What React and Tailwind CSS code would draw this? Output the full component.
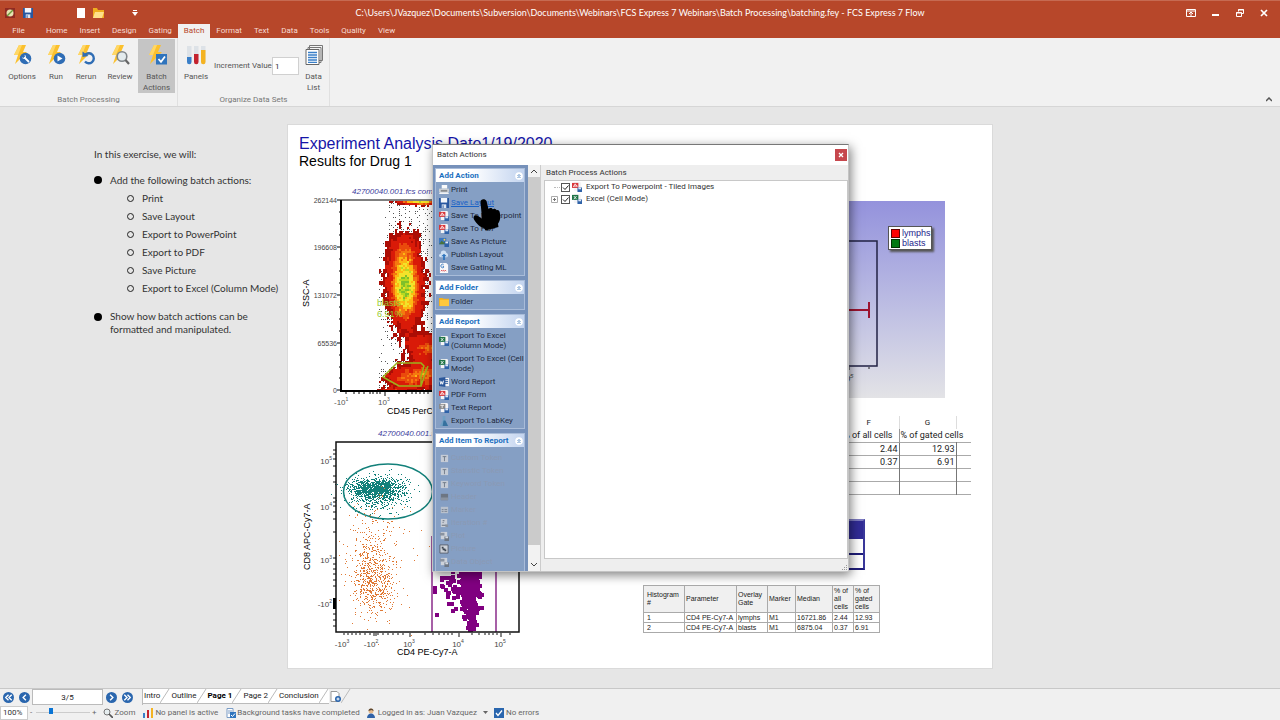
import { useState } from "react"
import clsx from "clsx"

// ---------- data ----------

const menuTabs = ["Home", "Insert", "Design", "Gating", "Batch", "Format", "Text", "Data", "Tools", "Quality", "View"]

const exercise = ["Print", "Save Layout", "Export to PowerPoint", "Export to PDF", "Save Picture", "Export to Excel (Column Mode)"]

const taskGroups = [
    {
        title: "Add Action",
        items: [
            { label: "Print", icon: "print" },
            { label: "Save Layout", icon: "save", active: true },
            { label: "Save To Powerpoint", icon: "pdf" },
            { label: "Save To PDF", icon: "pdf" },
            { label: "Save As Picture", icon: "picture" },
            { label: "Publish Layout", icon: "cloud" },
            { label: "Save Gating ML", icon: "xml" },
        ],
    },
    { title: "Add Folder", items: [{ label: "Folder", icon: "folder" }] },
    {
        title: "Add Report",
        items: [
            { label: "Export To Excel (Column Mode)", icon: "excel", tall: true },
            { label: "Export To Excel (Cell Mode)", icon: "excel", tall: true },
            { label: "Word Report", icon: "word" },
            { label: "PDF Form", icon: "pdf" },
            { label: "Text Report", icon: "text" },
            { label: "Export To LabKey", icon: "flask" },
        ],
    },
    {
        title: "Add Item To Report",
        disabled: true,
        items: [
            { label: "Custom Token", icon: "token" },
            { label: "Statistic Token", icon: "token" },
            { label: "Keyword Token", icon: "token" },
            { label: "Header", icon: "bar" },
            { label: "Marker", icon: "field" },
            { label: "Iteration #", icon: "xmlOff" },
            { label: "Plot", icon: "docOff" },
            { label: "Picture", icon: "frame" },
            { label: "Data Object", icon: "docOff" },
        ],
    },
]

const statRows = [
    ["1", "CD4 PE-Cy7-A", "lymphs", "M1", "16721.86", "2.44", "12.93"],
    ["2", "CD4 PE-Cy7-A", "blasts", "M1", "6875.04", "0.37", "6.91"],
]

// ---------- plot points ----------

function makeRandom(seed) {
    let s = seed
    return () => {
        s = (s * 1664525 + 1013904223) % 4294967296
        return s / 4294967296
    }
}

function cloud(seed, count, cx, cy, sx, sy, size, bottom = 999) {
    const rnd = makeRandom(seed)
    let d = ""
    for (let i = 0; i < count; i++) {
        const r = Math.sqrt(-2 * Math.log(rnd() + 0.0001))
        const a = rnd() * Math.PI * 2
        const x = Math.round(cx + r * Math.cos(a) * sx)
        const y = Math.round(cy + r * Math.sin(a) * sy)
        if (y + size <= bottom) d += `M${x} ${y}h${size}v${size}h-${size}z`
    }
    return d
}

const levels = [
    [0.97, "#7fc02a"],
    [0.86, "#b9d821"],
    [0.72, "#f2e32a"],
    [0.6, "#fdb813"],
    [0.5, "#f5780f"],
    [0.39, "#ea4a0c"],
    [0.2, "#d91a08"],
    [0.1, "#ab0d05"],
]

const blobs = [
    [63, 84, 10, 24, 0.98],
    [62, 44, 9, 10, 0.24],
    [84, 146, 12, 9, 0.46],
    [62, 176, 13, 8, 0.4],
    [86, 174, 14, 9, 0.42],
    [50, 189, 9, 2, 0.3],
    [66, 0, 9, 1, 0.25],
    [82, 0, 14, 2, 0.7],
]

function densityMap() {
    const rnd = makeRandom(77)
    const coarse = Array.from({ length: 26 * 49 }, () => rnd() - 0.5)
    const paths = levels.map(() => "")
    let dots = ""
    for (let y = 0; y < 190; y += 2) {
        for (let x = 0; x < 100; x += 2) {
            let v = 0
            for (const [bx, by, sx, sy, amp] of blobs) {
                v += amp * Math.exp(-((x - bx) ** 2) / (2 * sx * sx) - (y - by) ** 2 / (2 * sy * sy))
            }
            // clumps at the edge of a population are ragged, its core is smooth
            const clump = coarse[Math.floor(y / 4) * 26 + Math.floor(x / 4)]
            const noisy = v * (0.86 + rnd() * 0.28) + clump * (v > 0.02 ? 0.14 : 0.02)
            const i = levels.findIndex((l) => noisy > l[0])
            if (i >= 0) paths[i] += `M${x} ${y}h2v2h-2z`
            else if (x > 36 && rnd() < 0.05 + v * 4) dots += `M${x} ${y}h1v1h-1z`
            else if (x > 46 && y < 50 && rnd() < 0.14) dots += `M${x} ${y}h1v1h-1z`
        }
    }
    return { paths, dots }
}

const density = densityMap()
const tealCloud = cloud(5, 1000, 90, 46, 12, 5, 1) + cloud(9, 500, 92, 52, 16, 9, 1)
const orangeCloud = cloud(21, 620, 87, 139, 11, 17, 1) + cloud(31, 170, 85, 96, 13, 22, 1) + cloud(41, 25, 106, 105, 22, 32, 1)
const purpleCloud =
    cloud(61, 420, 183, 136, 5, 18, 4, 190) + cloud(65, 60, 183, 172, 3, 9, 4, 190) + cloud(71, 50, 168, 146, 10, 11, 4, 190)

// ---------- icons ----------

const Bolt = ({ children }) => (
    <svg viewBox="0 0 20 20" className="h-5 w-5">
        <path d="M7 0h7l-3 7h4L3 19l3-9H2z" fill="#fbc02d" />
        <path d="M7 0h3L6 10H2z" fill="#ffd766" />
        {children}
    </svg>
)

const ribbonIcons = {
    options: (
        <Bolt>
            <circle cx="13.5" cy="13.5" r="5.8" fill="#2f6db5" />
            <path d="M13 13l3.500 3.500" stroke="#fff" strokeWidth="1.800" strokeLinecap="round" />
            <path d="M12.500 9.800a2 2 0 1 1-2.500 2.500l1.500 .8 1.500-1.500z" fill="#fff" />
        </Bolt>
    ),
    run: (
        <Bolt>
            <circle cx="13.5" cy="13.5" r="5.8" fill="#2f6db5" />
            <path d="M11.500 10.500l5 3-5 3z" fill="#fff" />
        </Bolt>
    ),
    rerun: (
        <Bolt>
            <path d="M9.500 9.500A5 5 0 1 1 9 16.500" stroke="#2f6db5" strokeWidth="2.400" fill="none" />
            <path d="M6.500 12V6.500l6 4.500z" fill="#2f6db5" />
        </Bolt>
    ),
    review: (
        <Bolt>
            <circle cx="12" cy="11.500" r="4.800" fill="#e3ebee" stroke="#80868a" strokeWidth="1.600" />
            <path d="M15.500 15l3.500 4" stroke="#666" strokeWidth="2.200" />
        </Bolt>
    ),
    actions: (
        <Bolt>
            <rect x="9" y="9" width="11" height="10.500" fill="#2f74bd" />
            <path d="M11.500 14l2.500 2.800 4-5.300" stroke="#fff" strokeWidth="1.700" fill="none" />
        </Bolt>
    ),
    panels: (
        <svg viewBox="0 0 20 20" className="h-5 w-5">
            <path d="M1 1h4.500v16a2.200 2.200 0 0 1-4.500 0z" fill="#dde2e7" />
            <path d="M1 12h4.500v5a2.200 2.200 0 0 1-4.500 0z" fill="#3a7fc8" />
            <path d="M8 1h4.500v16a2.200 2.200 0 0 1-4.500 0z" fill="#dde2e7" />
            <path d="M8 9h4.500v8a2.200 2.200 0 0 1-4.500 0z" fill="#c4232e" />
            <path d="M15 1h4.500v16a2.200 2.200 0 0 1-4.500 0z" fill="#dde2e7" />
            <path d="M15 5h4.500v12a2.200 2.200 0 0 1-4.500 0z" fill="#f4b321" />
        </svg>
    ),
    list: (
        <svg viewBox="0 0 20 20" className="h-5 w-5">
            <path d="M5.500 .5h13v15h-13zM4 2.500h13v15H4z" fill="#f5f5f5" stroke="#777" />
            <path d="M2 4.500h13v15H2z" fill="#fff" stroke="#666" />
            <path d="M4 7.500h9M4 10h9M4 12.500h9M4 15h9M4 17.300h9" stroke="#3a7fc8" strokeWidth="1.300" />
        </svg>
    ),
}

const Doc = ({ color, letter }) => (
    <>
        <path d="M2 0h7l1 1v9H2z" fill="#f4f4f6" />
        <rect x="0" y="1" width="7" height="5.500" fill={color} />
        <path d={letter} fill="none" stroke="#fff" strokeWidth=".9" />
        <rect x="6" y="6" width="5" height="5" fill="#2f62a8" />
        <rect x="7" y="6" width="3" height="2" fill="#dfe8f5" />
    </>
)

const smallIcons = {
    print: (
        <>
            <path d="M3 0h6v4H3z" fill="#fafafa" />
            <path d="M0 4h11v4H0z" fill="#c9ccd0" />
            <path d="M2 6h7v1H2z" fill="#555" />
            <path d="M1 8h9l1 2H0z" fill="#f2f2f2" />
        </>
    ),
    save: (
        <>
            <path d="M0 0h11v11H0z" fill="#2757a0" />
            <path d="M2 0h7v5H2z" fill="#f3f6fb" />
            <path d="M3 7h5v4H3z" fill="#dde6f2" />
            <path d="M4 8h1v3H4z" fill="#2757a0" />
        </>
    ),
    pdf: <Doc color="#d8363a" letter="M1.500 5.500l2-3.500 2 3M2 4.500h4" />,
    text: <Doc color="#8b8b8b" letter="M1.500 2.500h4M3.500 2.500v3" />,
    excel: <Doc color="#1e7346" letter="M2 2.200l3 3.500M5 2.200L2 5.700" />,
    word: (
        <>
            <path d="M4 1h7v9H4z" fill="#f4f4f6" />
            <path d="M6 3h4M6 5h4M6 7h4" stroke="#2b579a" />
            <path d="M0 1l7-1v11l-7-1z" fill="#2b579a" />
            <path d="M1 4l1 4 1-3 1 3 1-4" stroke="#fff" fill="none" />
        </>
    ),
    picture: (
        <>
            <path d="M0 1h8v7H0z" fill="#3d77bd" />
            <path d="M0 8l3-4 2 2 1-1 2 3z" fill="#49733a" />
            <circle cx="6" cy="3" r="1" fill="#f7d154" />
            <path d="M6 5h5v6H6z" fill="#2f62a8" />
            <path d="M7 5h3v2H7z" fill="#dfe8f5" />
        </>
    ),
    cloud: (
        <>
            <path d="M2 8a2 2 0 0 1 0-4 3 3 0 0 1 6-1 3 3 0 0 1 1 5z" fill="#cfe0f3" />
            <path d="M5.500 4l3 3h-2v4h-2V7h-2z" fill="#2f74bd" />
        </>
    ),
    xml: (
        <>
            <path d="M1 0h7l2 2v9H1z" fill="#f8f8fa" />
            <path d="M5 1.500a2 2 0 1 0 0 3.500V3.500H4" stroke="#2f74bd" fill="none" />
            <path d="M2 9l1-1 1 1 1-1 1 1 1-1 1 1" stroke="#d8363a" fill="none" />
        </>
    ),
    folder: (
        <>
            <path d="M0 1h4l1 1h6v8H0z" fill="#f0ae1e" />
            <path d="M1 3h10v7H1z" fill="#ffc83d" />
        </>
    ),
    flask: (
        <>
            <path d="M4 0h3v5l3 6H1l3-6z" fill="#6f9fc4" />
            <path d="M5 5h2l3 6H4z" fill="#35719f" />
        </>
    ),
    token: (
        <>
            <path d="M2 2h8v8H2z" fill="#c6ccd6" />
            <path d="M4 4h4M6 4v5" stroke="#6e7887" />
        </>
    ),
    bar: (
        <>
            <path d="M2 2h8v7H2z" fill="#6d7683" />
            <path d="M2 6h8v3H2z" fill="#8a93a0" />
        </>
    ),
    field: (
        <>
            <path d="M2 2h8v7H2z" fill="#b9c1cd" />
            <path d="M3 5h2M6 5h3M3 7h2M6 7h3" stroke="#77818f" />
        </>
    ),
    xmlOff: (
        <>
            <path d="M2 1h7v9H2z" fill="#c9ced7" />
            <path d="M4 3h2M4 5h1M3 8h5" stroke="#5f6875" />
            <path d="M7 7h3v3H7z" fill="#8a93a0" />
        </>
    ),
    docOff: (
        <>
            <path d="M2 1h7v8H2z" fill="#cdd2da" />
            <path d="M1 2h5v3H1z" fill="#8a93a0" />
            <path d="M6 6h5v5H6z" fill="#6d7683" />
            <path d="M7 6h3v2H7z" fill="#d5dae1" />
        </>
    ),
    frame: (
        <>
            <path d="M1 1h9v9H1z" fill="#cdd2da" stroke="#555e6b" />
            <path d="M3 3h2v2H3zM6 6h2v2H6zM4 5h3v2H4z" fill="#3e4651" />
        </>
    ),
}

const SmallIcon = ({ name }) => (
    <svg viewBox="0 0 11 11" className="h-[10px] w-[10px] flex-none">{smallIcons[name]}</svg>
)

const Chevrons = () => (
    <svg viewBox="0 0 8 8" className="h-2 w-2">
        <circle cx="4" cy="4" r="3.800" fill="#fff" />
        <path d="M2.500 4L4 2.500 5.500 4M2.500 6L4 4.500 5.500 6" stroke="#3572b8" strokeWidth=".8" fill="none" />
    </svg>
)

// ---------- top ----------

const TitleBar = () => (
    <div className="flex h-[23px] items-center text-white">
        <div className="flex w-[160px] flex-none items-center pl-[5px]">
            <svg viewBox="0 0 10 10" className="h-[10px] w-[10px]">
                <path d="M0 0h10v10H0z" fill="#8f2a22" />
                <circle cx="5" cy="5" r="3.500" fill="#e7e2b2" />
                <path d="M2 8l6-6" stroke="#6e9b3c" strokeWidth="1.500" />
            </svg>
            <button aria-label="Save" className="ml-2">
                <svg viewBox="0 0 11 11" className="h-[10px] w-[10px]">{smallIcons.save}</svg>
            </button>
            <button aria-label="New" className="ml-11">
                <svg viewBox="0 0 8 10" className="h-[10px] w-2"><path d="M0 0h8v10H0z" fill="#fff" /></svg>
            </button>
            <button aria-label="Open" className="ml-2">
                <svg viewBox="0 0 11 10" className="h-[10px] w-[11px]">
                    <path d="M0 0h4l1 2h6v8H0z" fill="#f0ae1e" />
                    <path d="M2 4h9L9 10H0z" fill="#ffe08a" />
                </svg>
            </button>
            <button aria-label="Customize" className="ml-7">
                <svg viewBox="0 0 6 6" className="h-[6px] w-[6px]"><path d="M1 0h4v1H1zM0 2h6L3 6z" fill="#fff" /></svg>
            </button>
        </div>
        <p className="flex-1 text-center font-['Lato',sans-serif] text-[9px] whitespace-nowrap">C:\Users\JVazquez\Documents\Subversion\Documents\Webinars\FCS Express 7 Webinars\Batch Processing\batching.fey - FCS Express 7 Flow</p>
        <div className="flex w-[160px] flex-none items-center justify-end gap-4 pr-3">
            <button aria-label="Ribbon display">
                <svg viewBox="0 0 10 8" className="h-2 w-[10px]" fill="none" stroke="#fff"><path d="M.5 .5h9v7h-9zM1 2h8M5 7V4M3 5l2-2 2 2" /></svg>
            </button>
            <button aria-label="Minimize">
                <svg viewBox="0 0 8 8" className="h-2 w-2"><path d="M0 5h7v2H0z" fill="#fff" /></svg>
            </button>
            <button aria-label="Restore">
                <svg viewBox="0 0 8 8" className="h-2 w-2" fill="none" stroke="#fff"><path d="M2.500 2.500V.5h5v4h-2M2 1h6M.5 3.500h5v4h-5zM0 4h6" /></svg>
            </button>
            <button aria-label="Close">
                <svg viewBox="0 0 8 8" className="h-2 w-2" stroke="#fff" strokeWidth="1.700"><path d="M1 1l6 6M7 1L1 7" /></svg>
            </button>
        </div>
    </div>
)

const RibbonButton = ({ icon, label, active, className }) => (
    <button className={clsx("flex h-[54px] flex-none flex-col items-center pt-[6px]", active && "bg-[#c5c5c5]", className)}>
        {ribbonIcons[icon]}
        <span className="mt-[6px] text-center leading-[11px]">{label}</span>
    </button>
)

const Ribbon = () => (
    <div className="flex h-[69px] border-b border-[#d6d6d6] bg-[#f1f1f1] text-[8px] text-[#555]">
        <div className="flex w-[178px] flex-none flex-col border-r border-[#e0e0e0] pt-px">
            <div className="flex">
                <RibbonButton icon="options" label="Options" className="w-11" />
                <RibbonButton icon="run" label="Run" className="w-6" />
                <RibbonButton icon="rerun" label="Rerun" className="w-9" />
                <RibbonButton icon="review" label="Review" className="mr-[2px] w-8" />
                <RibbonButton icon="actions" label="Batch Actions" active className="w-[37px]" />
            </div>
            <p className="text-center leading-[14px] text-[#777]">Batch Processing</p>
        </div>
        <div className="flex w-[152px] flex-none flex-col border-r border-[#e0e0e0] pt-px">
            <div className="flex">
                <RibbonButton icon="panels" label="Panels" className="w-9" />
                <div className="flex h-[54px] flex-1 items-center justify-between">
                    <label htmlFor="increment" className="whitespace-nowrap">Increment Value</label>
                    <input id="increment" defaultValue="1" className="h-[18px] w-[27px] border border-[#d0d0d0] bg-white px-[2px] text-[#333]" />
                </div>
                <RibbonButton icon="list" label="Data List" className="mr-px w-[29px] px-1" />
            </div>
            <p className="text-center leading-[14px] text-[#777]">Organize Data Sets</p>
        </div>
        <div className="flex flex-1 items-end justify-end pr-2 pb-1">
            <button aria-label="Collapse ribbon">
                <svg viewBox="0 0 6 5" className="h-[5px] w-[6px]"><path d="M0 4l3-3 3 3" fill="none" stroke="#555" strokeWidth="1.500" /></svg>
            </button>
        </div>
    </div>
)

// ---------- page ----------

const Notes = () => (
    <aside className="w-[287px] flex-none pt-10 pl-[94px] font-['Lato',sans-serif] text-[10px] text-[#333]">
        <p className="leading-[14px]">In this exercise, we will:</p>
        <ul className="mt-3 w-[190px]">
            <li className="flex">
                <span className="mt-[3px] mr-2 h-2 w-2 rounded-full bg-black"></span>
                <div>
                    <p className="leading-[14px]">Add the following batch actions:</p>
                    <ul className="mt-[2px] pl-[17px]">
                        {exercise.map((e) => (
                            <li key={e} className="flex h-[18px] items-center whitespace-nowrap">
                                <span className="mr-2 h-[7px] w-[7px] rounded-full border border-[#222]"></span>
                                {e}
                            </li>
                        ))}
                    </ul>
                </div>
            </li>
            <li className="mt-[13px] flex">
                <span className="mt-[3px] mr-2 h-2 w-2 flex-none rounded-full bg-black"></span>
                <p className="w-[150px] leading-[13px]">Show how batch actions can be formatted and manipulated.</p>
            </li>
        </ul>
    </aside>
)

const sscTicks = [["262144", 12], ["196608", 59], ["131072", 107], ["65536", 155], ["0", 202]]

const DensityPlot = () => (
    <svg viewBox="0 0 160 240" className="absolute top-[63px] left-[10px] h-[240px] w-[160px] overflow-visible" fontFamily="Liberation Sans">
        <text x="54" y="6" fontSize="8" fontStyle="italic" fill="#3a3a9c">42700040.001.fcs compensated</text>
        <text transform="translate(11 119) rotate(-90)" fontSize="9" fill="#000">SSC-A</text>
        {sscTicks.map(([t, y]) => (
            <g key={t}>
                <text x="39" y={y + 3} fontSize="7" textAnchor="end" fill="#444">{t}</text>
                <path d={`M39 ${y}h4`} stroke="#000" />
            </g>
        ))}
        <path d="M41 24h2M41 36h2M41 47h2M41 71h2M41 83h2M41 95h2M41 119h2M41 131h2M41 143h2M41 167h2M41 179h2M41 190h2" stroke="#000" />
        <g transform="translate(43 13)" shapeRendering="crispEdges">
            <path d={density.dots} fill="#555" />
            {density.paths.map((d, i) => <path key={i} d={d} fill={levels[i][1]} />)}
        </g>
        <path d="M43 12v191h117" fill="none" stroke="#000" strokeWidth="2" />
        <path d="M43 12h117" stroke="#000" />
        <path d="M48 204v2M56 204v2M61 204v2M66 204v2M72 204v2M75 204v2M79 204v2M82 204v2M87 204v4M101 204v2M108 204v2M114 204v2M118 204v2M122 204v2M126 204v2M130 204v2" stroke="#000" />
        <path d="M85 189l14-14h24l3 3-3 10v10h-22zM123 198l4-12 3-8" fill="none" stroke="#9bb31c" strokeWidth="1.500" />
        <text x="79" y="118" fontSize="9" fill="#9acd32">blasts</text>
        <text x="79" y="129" fontSize="9" fill="#9acd32">6.91%</text>
        <text x="36" y="217" fontSize="8" fill="#555">-10<tspan dy="-4" fontSize="5">1</tspan></text>
        <text x="80" y="217" fontSize="8" fill="#555">10<tspan dy="-4" fontSize="5">3</tspan></text>
        <text x="89" y="226" fontSize="9" fill="#000">CD45 PerCP-A</text>
    </svg>
)

const cd8Ticks = [["10", "5", 19], ["10", "4", 65], ["10", "3", 118], ["-10", "2", 162]]
const cd4Ticks = [["-10", "3", 7], ["-10", "2", 36], ["10", "3", 74], ["10", "4", 123], ["10", "5", 165]]

const ScatterPlot = () => (
    <svg viewBox="0 0 240 240" className="absolute top-[303px] left-[10px] h-[240px] w-[240px] overflow-visible" fontFamily="Liberation Sans">
        <text x="80" y="8" fontSize="8" fontStyle="italic" fill="#3a3a9c">42700040.001.fcs compensated</text>
        <text transform="translate(12 142) rotate(-90)" fontSize="9" fill="#000">CD8 APC-Cy7-A</text>
        <g shapeRendering="crispEdges" transform="translate(-12 14)">
            <path d={tealCloud} fill="#12807a" />
            <path d={orangeCloud} fill="#e07a35" />
            <path d={purpleCloud} fill="#800080" />
        </g>
        <ellipse cx="90" cy="63.500" rx="44.500" ry="27.500" fill="none" stroke="#12807a" strokeWidth="1.500" />
        <path d="M134 108v96M198 108v96M134 108h64" fill="none" stroke="#8a2c8a" strokeWidth="1.500" />
        <path d="M38 14h183v190H38z" fill="none" stroke="#111" strokeWidth="1.500" />
        <path d="M35 20h3M35 24h3M35 29h3M35 36h3M35 46h3M35 52h3M35 68h3M35 72h3M35 76h3M35 82h3M35 89h3M35 102h3M35 128h3M35 134h3M35 139h3M35 144h3M35 150h3M35 156h3M35 184h3M35 190h3M35 196h3" transform="translate(0 2)" stroke="#111" />
        <path d="M35 170h3v11h-3z" fill="#000" />
        <path d="M46 205v2M50 205v2M54 205v2M58 205v2M62 205v2M67 205v2M72 205v2M76 205v3M78 205v3M80 205v2M85 205v2M90 205v2M95 205v2M100 205v2M105 205v2M112 205v4M127 205v2M135 205v2M141 205v2M146 205v2M150 205v2M154 205v2M161 205v4M174 205v2M181 205v2M187 205v2M191 205v2M195 205v2M199 205v2M203 205v4M212 205v2" stroke="#111" />
        {cd8Ticks.map(([b, e, y]) => (
            <text key={b + e} x="34" y={y + 17} fontSize="8" textAnchor="end" fill="#444">{b}<tspan dy="-4" fontSize="5">{e}</tspan></text>
        ))}
        {cd4Ticks.map(([b, e, x]) => (
            <text key={b + e} x={x + 37} y="219" fontSize="8" textAnchor="middle" fill="#444">{b}<tspan dy="-4" fontSize="5">{e}</tspan></text>
        ))}
        <text x="99" y="227" fontSize="9" fill="#000">CD4 PE-Cy7-A</text>
    </svg>
)

const OverlayPlot = () => (
    <div className="absolute top-[76px] left-[357px] h-[197px] w-[300px] bg-linear-to-b from-[#9492dc] to-[#e3e3e6]">
        <svg viewBox="0 0 300 197" className="h-full w-full" fontFamily="Liberation Sans">
            <path d="M30 40h202v125H30z" fill="none" stroke="#222244" strokeWidth="1.500" />
            <path d="M100 109h124" stroke="#9c1430" strokeWidth="2" />
            <path d="M224 101v16" stroke="#9c1430" strokeWidth="2" />
            <path d="M204 166v3M224 166v2" stroke="#222" />
            <text x="195" y="181" fontSize="9" fontStyle="italic" fill="#444">10<tspan dy="-4" fontSize="6">5</tspan></text>
        </svg>
        <div className="absolute top-[25px] right-[13px] w-[44px] border border-[#555] bg-white py-px pl-[2px] font-['Liberation_Sans',sans-serif] text-[9px] leading-[10px] text-[#1d1d8c] shadow-[2px_2px_2px_#555]">
            <p className="flex items-center gap-[2px]"><span className="h-[9px] w-[9px] border border-[#600] bg-[#f00]"></span>lymphs</p>
            <p className="flex items-center gap-[2px]"><span className="h-[9px] w-[9px] border border-[#030] bg-[#007a10]"></span>blasts</p>
        </div>
    </div>
)

const SheetTable = () => (
    <table className="absolute top-[291px] left-[551px] w-[132px] table-fixed border-collapse text-[9px] leading-[12px] whitespace-nowrap text-[#222]">
        <colgroup>
            <col className="w-[60px]" />
            <col className="w-[57px]" />
            <col />
        </colgroup>
        <thead>
            <tr className="h-[13px] text-[8px]">
                <th className="border-r border-[#ddd] font-normal">F</th>
                <th className="border-r border-[#ddd] font-normal">G</th>
                <th></th>
            </tr>
        </thead>
        <tbody className="text-right">
            <tr className="h-[13px] border-b border-[#aaa]">
                <td className="border-r border-[#999] pr-[6px]">% of all cells</td>
                <td className="pl-px text-left">% of gated cells</td>
                <td></td>
            </tr>
            {[["2.44", "12.93"], ["0.37", "6.91"], ["", ""], ["", ""]].map(([f, g], i) => (
                <tr key={i} className="h-[13px] border-b border-[#aaa]">
                    <td className="border-r border-[#777] pr-px">{f}</td>
                    <td className="border-r border-[#777] pr-px">{g}</td>
                    <td></td>
                </tr>
            ))}
        </tbody>
    </table>
)

const StatsTable = () => (
    <table className="absolute top-[460px] left-[355px] w-[237px] table-fixed border border-[#888] font-['Liberation_Sans',sans-serif] text-[7px] leading-[8px] text-[#222]">
        <colgroup>
            <col className="w-[41px]" />
            <col className="w-[52px]" />
            <col className="w-[31px]" />
            <col className="w-[28px]" />
            <col className="w-[37px]" />
            <col className="w-[21px]" />
            <col />
        </colgroup>
        <thead>
            <tr className="h-[27px] bg-[#f0f0f0] text-left">
                {["Histogram #", "Parameter", "Overlay Gate", "Marker", "Median", "% of all cells", "% of gated cells"].map((h) => (
                    <th key={h} className="border border-[#aaa] px-px font-normal first:pl-[3px]">{h}</th>
                ))}
            </tr>
        </thead>
        <tbody>
            {statRows.map((r) => (
                <tr key={r[0]} className="h-[10px] whitespace-nowrap">
                    {r.map((c, i) => <td key={i} className="border border-[#aaa] px-px first:pl-[3px]">{c}</td>)}
                </tr>
            ))}
        </tbody>
    </table>
)

const LayoutPage = () => (
    <section className="relative mt-[17px] h-[545px] w-[706px] flex-none overflow-hidden border border-[#dadada] bg-white">
        <h1 className="pt-[10px] pl-[11px] font-['Liberation_Sans',sans-serif] text-[16px] leading-[18px] text-[#1515a8]">Experiment Analysis Date1/19/2020</h1>
        <h2 className="pl-[11px] font-['Liberation_Sans',sans-serif] text-[14px] leading-[16px] text-black">Results for Drug 1</h2>
        <DensityPlot />
        <ScatterPlot />
        <OverlayPlot />
        <SheetTable />
        <div className="absolute top-[394px] left-[452px] w-[125px] border-t-2 border-r-2 border-b-2 border-t-[#7d7bc0] border-r-[#3a389a] border-b-[#1f1d7a]">
            <div className="h-[18px] bg-[#312c96]"></div>
            <div className="h-[16px] border-b-2 border-[#1f1d7a]"></div>
            <div className="h-[13px]"></div>
        </div>
        <StatsTable />
    </section>
)

// ---------- dialog ----------

const TaskGroup = ({ group }) => {
    const [open, setOpen] = useState(true)
    return (
        <div className={clsx("border border-[#a9bcd9]", group.disabled && "flex-1")}>
            <button
                className="flex h-[13px] w-full items-center justify-between bg-linear-to-r from-white from-40% to-[#c3d4ef] pr-px pl-[3px] text-[8px] font-bold whitespace-nowrap text-[#1b6fc0]"
                onClick={() => setOpen((prev) => !prev)}
            >
                {group.title}
                <Chevrons />
            </button>
            {open && (
                <ul className={clsx("bg-[#859fc4]", group.disabled ? "py-1" : "py-px")}>
                    {group.items.map((item) => (
                        <li key={item.label}>
                            <button
                                disabled={group.disabled}
                                className={clsx(
                                    "flex w-full items-center gap-[2px] pl-[3px] text-left text-[8px] leading-[10px]",
                                    item.tall ? "h-[23px]" : "h-[13px] whitespace-nowrap",
                                    group.disabled && "text-[#8b9ab4]",
                                    !group.disabled && (item.active ? "text-[#1a62c6] underline" : "text-[#1f2a3c]")
                                )}
                            >
                                <SmallIcon name={item.icon} />
                                {item.label}
                            </button>
                        </li>
                    ))}
                </ul>
            )}
        </div>
    )
}

const TreeItem = ({ id, icon, label, expandable }) => {
    const [checked, setChecked] = useState(true)
    return (
        <li className="flex h-3 items-center">
            <span className="flex w-4 items-center pl-[6px]">
                {expandable ? (
                    <button aria-label="Expand">
                        <svg viewBox="0 0 7 7" className="h-[7px] w-[7px]" fill="none"><path d="M.5 .5h6v6h-6z" stroke="#aaa" /><path d="M2 3.500h3M3.500 2v3" stroke="#777" /></svg>
                    </button>
                ) : (
                    <span className="ml-[3px] w-[6px] border-t border-dotted border-[#bbb]"></span>
                )}
            </span>
            <span className="relative flex h-[9px] w-[9px]">
                <input
                    id={id}
                    type="checkbox"
                    checked={checked}
                    onChange={() => setChecked((prev) => !prev)}
                    className="peer h-[9px] w-[9px] appearance-none border border-[#555] bg-white"
                />
                <svg viewBox="0 0 9 9" className="pointer-events-none absolute inset-0 hidden h-[9px] w-[9px] peer-checked:block"><path d="M2 4.500l2 2L7.500 2.500" fill="none" stroke="#222" /></svg>
            </span>
            <label htmlFor={id} className="flex items-center gap-1 pl-[2px]">
                <SmallIcon name={icon} />
                {label}
            </label>
        </li>
    )
}

const BatchDialog = () => (
    <div role="dialog" aria-label="Batch Actions" className="absolute top-[37px] left-[432px] flex h-[428px] w-[417px] flex-col border border-t-[#777] border-[#c4c4c4] bg-[#eee] text-[8px] text-[#333] shadow-[2px_3px_10px_rgba(0,0,0,0.5)]">
        <header className="flex h-5 flex-none items-center justify-between bg-white pr-px pl-1">
            <h3>Batch Actions</h3>
            <button aria-label="Close" className="flex h-3 w-3 items-center justify-center bg-[#c6474d]">
                <svg viewBox="0 0 6 6" className="h-[6px] w-[6px]" stroke="#fff" strokeWidth="1.300"><path d="M1 1l4 4M5 1L1 5" /></svg>
            </button>
        </header>
        <div className="flex min-h-0 flex-1">
            <nav className="flex w-[95px] flex-none flex-col gap-1 overflow-hidden bg-[#7691ba] pt-[3px] pr-[3px] pl-[2px]">
                {taskGroups.map((g) => <TaskGroup key={g.title} group={g} />)}
            </nav>
            <div className="flex w-3 flex-none flex-col bg-[#f2f2f2]">
                <button aria-label="Scroll up" className="flex h-3 items-center justify-center">
                    <svg viewBox="0 0 6 4" className="h-1 w-[6px]"><path d="M0 4l3-3 3 3" fill="none" stroke="#444" /></svg>
                </button>
                <div className="flex-1 bg-[#cbcbcb]"></div>
                <button aria-label="Scroll down" className="flex h-[26px] items-end justify-center pb-1">
                    <svg viewBox="0 0 6 4" className="h-1 w-[6px]"><path d="M0 0l3 3 3-3" fill="none" stroke="#444" /></svg>
                </button>
            </div>
            <div className="flex flex-1 flex-col border-l border-[#ccc] pl-[3px]">
                <p className="pl-[2px] leading-[15px]">Batch Process Actions</p>
                <ul className="flex-1 border border-[#c8c8c8] bg-white">
                    <TreeItem id="tiled" icon="pdf" label="Export To Powerpoint - Tiled Images" />
                    <TreeItem id="cell" icon="excel" label="Excel (Cell Mode)" expandable />
                </ul>
                <div className="flex h-3 items-end justify-end">
                    <svg viewBox="0 0 6 6" className="h-[6px] w-[6px]"><path d="M4 0h1v1H4zM2 2h1v1H2zM4 2h1v1H4zM0 4h1v1H0zM2 4h1v1H2zM4 4h1v1H4z" fill="#999" /></svg>
                </div>
            </div>
        </div>
    </div>
)

const HandPointer = () => (
    <svg viewBox="0 0 28 35" className="pointer-events-none absolute top-[91px] left-[473px] h-[35px] w-7">
        <path d="M7.500 4C7 1 12 0 13.500 3l2 8c1-1.500 3.500-1.500 4.300.300 1.200-1 3.200-.5 3.700 1 1.500-.6 2.800.3 3.200 2 1 4 .8 8-1.700 11.500l.5 3.200-13 3.500-1.500-2.500C7 29.500 4 26 1 21.500c-1.700-3 1.500-5.500 4-3.500l4 2.500z" fill="#000" />
    </svg>
)

// ---------- bottom ----------

const NavButton = ({ label, d }) => (
    <button aria-label={label} className="flex w-4 justify-center">
        <svg viewBox="0 0 12 12" className="h-[11px] w-[11px]">
            <circle cx="6" cy="6" r="6" fill="#2a66ae" />
            <path d={d} fill="none" stroke="#fff" strokeWidth="1.500" />
        </svg>
    </button>
)

const Slant = () => (
    <svg viewBox="0 0 10 14" className="h-[14px] w-[10px] flex-none"><path d="M0 14L9 0" stroke="#bbb" /></svg>
)

const PageTabs = () => {
    const [page, setPage] = useState("Page 1")
    return (
        <div className="flex h-[17px] items-center border-t border-[#c8c8c8] bg-[#f0f0f0] text-[8px] text-[#222]">
            <NavButton label="First page" d="M6 3L3 6l3 3M9.500 3l-3 3 3 3" />
            <NavButton label="Previous page" d="M7.500 3l-3 3 3 3" />
            <input aria-label="Page" defaultValue="3/5" className="h-4 w-[71px] border border-[#bbb] bg-white text-center" />
            <NavButton label="Next page" d="M4.500 3l3 3-3 3" />
            <NavButton label="Last page" d="M2.500 3l3 3-3 3M6 3l3 3-3 3" />
            <div className="ml-[7px] flex h-full items-start border-l border-[#bbb]">
                {["Intro", "Outline", "Page 1", "Page 2", "Conclusion"].map((p) => (
                    <div key={p} className="flex border-b border-[#bbb] bg-white">
                        <button className={clsx("pl-px leading-[14px] whitespace-nowrap", p === page && "font-bold text-black")} onClick={() => setPage(p)}>{p}</button>
                        <Slant />
                    </div>
                ))}
                <button aria-label="Add page" className="ml-px pt-[2px]">
                    <svg viewBox="0 0 11 11" className="h-[11px] w-[11px]">
                        <path d="M1 .5h6l2 2v8H1z" fill="#fff" stroke="#999" />
                        <circle cx="8" cy="8" r="3" fill="#2a66ae" />
                        <path d="M6.500 8h3M8 6.500v3" stroke="#fff" />
                    </svg>
                </button>
                <Slant />
            </div>
        </div>
    )
}

const StatusBar = () => (
    <footer className="flex h-[15px] items-center bg-[#f0f0f0] text-[8px] whitespace-nowrap text-[#666]">
        <input aria-label="Zoom level" defaultValue="100%" className="h-[14px] w-7 border border-[#ccc] bg-white px-[2px] text-[#333]" />
        <span className="ml-[2px] w-[4px]">-</span>
        <input
            aria-label="Zoom"
            type="range"
            min="0"
            max="100"
            defaultValue="26"
            className="mx-[2px] h-2 w-[54px] appearance-none bg-transparent [&::-webkit-slider-runnable-track]:h-px [&::-webkit-slider-runnable-track]:bg-[#ccc] [&::-webkit-slider-thumb]:-mt-1 [&::-webkit-slider-thumb]:h-[6px] [&::-webkit-slider-thumb]:w-1 [&::-webkit-slider-thumb]:appearance-none [&::-webkit-slider-thumb]:bg-[#0a74d4]"
        />
        <span>+</span>
        <button className="ml-[6px] flex items-center gap-[2px]">
            <svg viewBox="0 0 10 10" className="h-[10px] w-[10px]"><circle cx="4" cy="4" r="3" fill="#e6eef0" stroke="#777" /><path d="M6 6l4 4" stroke="#555" strokeWidth="1.700" /></svg>
            Zoom
        </button>
        <p className="ml-2 flex items-center gap-[2px]">
            <svg viewBox="0 0 10 10" className="h-[10px] w-[10px]"><path d="M0 5h2v5H0z" fill="#3a7fc8" /><path d="M4 2h2v8H4z" fill="#c4232e" /><path d="M8 0h2v10H8z" fill="#f4b321" /></svg>
            No panel is active
        </p>
        <p className="ml-2 flex items-center gap-px">
            <svg viewBox="0 0 10 10" className="h-[10px] w-[10px]"><path d="M1 .5h6v9H1z" fill="#fff" stroke="#7a9cc6" /><path d="M2 3h4M2 5h3" stroke="#7a9cc6" /><path d="M4 4h6v6H4z" fill="#2f74bd" /><path d="M5 7l1.500 1.500L9 5.500" stroke="#fff" fill="none" /></svg>
            Background tasks have completed
        </p>
        <button className="ml-[6px] flex items-center gap-[2px]">
            <svg viewBox="0 0 10 10" className="h-[10px] w-[10px]"><circle cx="5" cy="3" r="2.500" fill="#e5b98c" /><path d="M2.500 3a2.500 2.500 0 0 1 5 0l-2-1z" fill="#5a4630" /><path d="M1 10c0-6 8-6 8 0z" fill="#2f62a8" /></svg>
            Logged in as: Juan Vazquez
            <svg viewBox="0 0 5 3" className="ml-1 h-[3px] w-[5px]"><path d="M0 0h5L2.500 3z" fill="#666" /></svg>
        </button>
        <p className="ml-[6px] flex items-center gap-[2px]">
            <svg viewBox="0 0 10 10" className="h-[10px] w-[10px]"><path d="M0 0h10v10H0z" fill="#2a66ae" /><path d="M2 5l2 2.500L8 2.500" stroke="#fff" strokeWidth="1.300" fill="none" /></svg>
            No errors
        </p>
    </footer>
)

const App = () => {
    const [tab, setTab] = useState("Batch")
    return (
        <div className="flex h-screen flex-col overflow-hidden bg-[#e6e6e6] font-['Roboto',sans-serif]">
            <header className="flex-none border-t border-[#c66a52] bg-[#b7472a]">
                <TitleBar />
                <nav className="flex h-[14px] text-[8px] leading-[14px] text-[#f6dcd5]">
                    <button className="w-[40px] pr-[3px]">File</button>
                    {menuTabs.map((t) => (
                        <button key={t} className={clsx("px-[6px]", t === tab && "bg-[#f1f1f1] text-[#b7472a]")} onClick={() => setTab(t)}>{t}</button>
                    ))}
                </nav>
            </header>
            <Ribbon />
            <main className="relative flex min-h-0 flex-1 overflow-hidden">
                <Notes />
                <LayoutPage />
                <BatchDialog />
                <HandPointer />
            </main>
            <PageTabs />
            <StatusBar />
        </div>
    )
}

export default App
